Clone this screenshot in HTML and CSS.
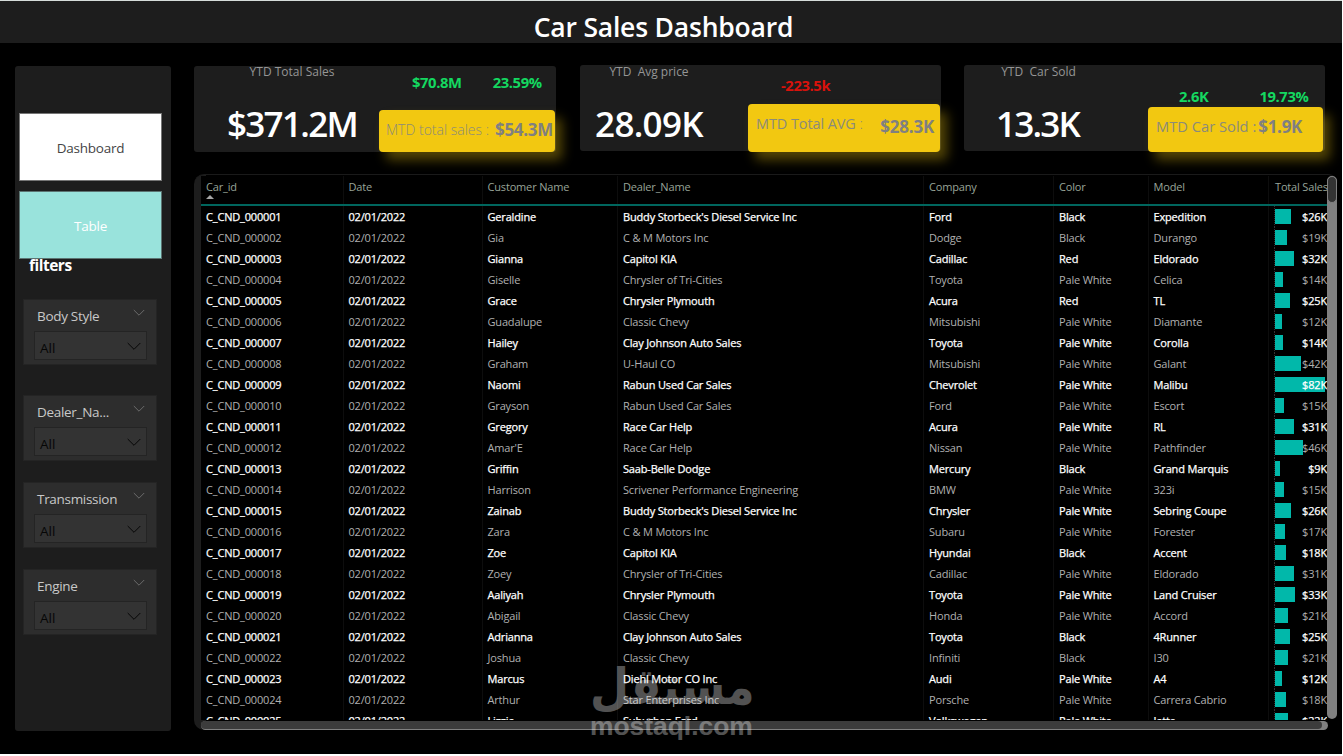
FILE: index.html
```html
<!DOCTYPE html>
<html lang="en">
<head>
    <meta charset="utf-8">
    <title>Car Sales Dashboard</title>
    <link rel="stylesheet" href="styles.css">
</head>
<body>
    <div class="page">
        <header class="top">
            <h1>Car Sales Dashboard</h1>
        </header>
        <div class="main">
            <aside class="sidebar">
                <button class="nav-btn">Dashboard</button>
                <button class="nav-btn active">Table</button>
                <h2>filters</h2>
                <div class="filter">
                    <div class="filter-head"><span>Body Style</span><svg width="12" height="8" viewBox="0 0 12 8"><path d="M0.8 1 L6 6.2 L11.2 1"/></svg></div>
                    <div class="select"><span>All</span><svg width="14" height="9" viewBox="0 0 14 9"><path d="M0.7 1 L7 7.3 L13.3 1"/></svg></div>
                </div>
                <div class="filter">
                    <div class="filter-head"><span>Dealer_Na...</span><svg width="12" height="8" viewBox="0 0 12 8"><path d="M0.8 1 L6 6.2 L11.2 1"/></svg></div>
                    <div class="select"><span>All</span><svg width="14" height="9" viewBox="0 0 14 9"><path d="M0.7 1 L7 7.3 L13.3 1"/></svg></div>
                </div>
                <div class="filter">
                    <div class="filter-head"><span>Transmission</span><svg width="12" height="8" viewBox="0 0 12 8"><path d="M0.8 1 L6 6.2 L11.2 1"/></svg></div>
                    <div class="select"><span>All</span><svg width="14" height="9" viewBox="0 0 14 9"><path d="M0.7 1 L7 7.3 L13.3 1"/></svg></div>
                </div>
                <div class="filter">
                    <div class="filter-head"><span>Engine</span><svg width="12" height="8" viewBox="0 0 12 8"><path d="M0.8 1 L6 6.2 L11.2 1"/></svg></div>
                    <div class="select"><span>All</span><svg width="14" height="9" viewBox="0 0 14 9"><path d="M0.7 1 L7 7.3 L13.3 1"/></svg></div>
                </div>
            </aside>
            <div class="content">
                <section class="cards">
                    <div class="card sales">
                        <div class="ytd">
                            <span class="label">YTD Total Sales</span>
                            <b class="value">$371.2M</b>
                        </div>
                        <div class="deltas"><span>$70.8M</span><span>23.59%</span></div>
                        <div class="mtd"><span>MTD total sales :</span><b>$54.3M</b></div>
                    </div>
                    <div class="card avg">
                        <div class="ytd">
                            <span class="label">YTD&nbsp; Avg price</span>
                            <b class="value">28.09K</b>
                        </div>
                        <div class="deltas down"><span>-223.5k</span></div>
                        <div class="mtd"><span>MTD Total AVG <i>:</i></span><b>$28.3K</b></div>
                    </div>
                    <div class="card sold">
                        <div class="ytd">
                            <span class="label">YTD&nbsp; Car Sold</span>
                            <b class="value">13.3K</b>
                        </div>
                        <div class="deltas"><span>2.6K</span><span>19.73%</span></div>
                        <div class="mtd"><span>MTD Car Sold :</span><b>$1.9K</b></div>
                    </div>
                </section>
                <section class="table-box">
                    <div class="table-view">
                        <div class="row head">
                            <div>Car_id<svg class="sort" width="8" height="4" viewBox="0 0 8 4"><path d="M4 0 L8 4 H0 Z"/></svg></div>
                            <div>Date</div>
                            <div>Customer Name</div>
                            <div>Dealer_Name</div>
                            <div>Company</div>
                            <div>Color</div>
                            <div>Model</div>
                            <div>Total Sales</div>
                        </div>
                        <div id="rows" class="rows"></div>
                    </div>
                    <div class="scroll-y"><div class="thumb"></div></div>
                    <div class="scroll-x"><div class="thumb"></div></div>
                </section>
            </div>
        </div>
        <div class="watermark">
            <span class="wm-ar" lang="ar">مستقل</span>
            <span class="wm-en">mostaql.com</span>
        </div>
    </div>
    <script src="script.js"></script>
</body>
</html>
```
FILE: styles.css
```css
* {
    box-sizing: border-box;
}

body {
    margin: 0;
    background: #fff;
    font-family: "Open Sans", "Noto Sans", sans-serif;
    overflow: hidden;
}

.page {
    position: relative;
    width: 1342px;
    height: 754px;
    background: #000;
    border-top: 1px solid #d5dcda;
    overflow: hidden;
}

.top {
    height: 42px;
    background: #1d1d1d;
    text-align: center;
}

h1 {
    margin: 0;
    padding-right: 15px;
    color: #fff;
    font-size: 26.5px;
    line-height: 53px;
    font-weight: 600;
    letter-spacing: -0.2px;
}

.main {
    display: flex;
    padding: 22px 0 0 15px;
    gap: 23px;
}

/* sidebar */
.sidebar {
    width: 156px;
    height: 665px;
    margin-top: 1px;
    padding: 47px 4px 0 4px;
    background: #1d1d1d;
    border-radius: 3px;
}

.nav-btn {
    display: block;
    width: 143px;
    height: 68px;
    margin: 0 0 10px;
    padding: 2px 0 0;
    border: 1px solid #757575;
    background: #fff;
    color: #444;
    font-family: inherit;
    font-size: 13.5px;
    letter-spacing: -0.25px;
}

.nav-btn.active {
    margin-bottom: 0;
    background: #99e3dc;
    color: #fff;
    border-color: #5c7472;
}

h2 {
    margin: -3px 0 0 10px;
    height: 43px;
    color: #fff;
    font-size: 15.5px;
    line-height: 19px;
    font-weight: 700;
    letter-spacing: -0.5px;
}

.filter {
    width: 134px;
    height: 66px;
    margin: 0 0 21px 4px;
    padding: 6px 10px 0 10px;
    background: #2d2d2d;
    border: 1px solid #242424;
}

.filter:nth-of-type(1) {
    margin-bottom: 30px;
}

.filter-head {
    display: flex;
    justify-content: space-between;
    padding: 0 1px 0 3px;
    height: 25px;
    color: #c8c8c8;
    font-size: 13.5px;
    line-height: 20px;
    letter-spacing: -0.3px;
}

.filter-head svg {
    margin-top: 3px;
}

svg path {
    fill: none;
    stroke: #6c6c6c;
}

.select {
    display: flex;
    justify-content: space-between;
    width: 113px;
    height: 29px;
    padding: 0 5px;
    background: #333;
    border: 1px solid #242424;
    color: #060606;
    font-size: 13.5px;
    line-height: 33px;
}

.select svg {
    margin-top: 10px;
}

.select svg path {
    stroke: #060606;
}

/* cards */
.cards {
    display: flex;
    height: 87px;
}

.card {
    position: relative;
    display: flex;
    width: 361px;
    height: 86px;
    background: #1d1d1d;
    border-radius: 3px;
}

.sales {
    width: 362px;
    margin: 1px 24px 0 0;
}

.avg {
    margin-right: 23px;
}

.ytd {
    display: flex;
    flex-direction: column;
    align-items: center;
    width: 196px;
}

.avg .ytd {
    width: 138px;
}

.sold .ytd {
    width: 149px;
}

.label {
    color: #959595;
    font-size: 12px;
    line-height: 13px;
}

.sales .label {
    line-height: 11px;
    margin-bottom: 1px;
}

.value {
    color: #fff;
    font-size: 35px;
    line-height: 40px;
    margin-top: 26px;
    font-weight: 600;
    letter-spacing: -0.7px;
}

.sales .value {
    letter-spacing: -1.7px;
}

.sold .value {
    letter-spacing: -1.8px;
    padding-right: 2px;
}

.deltas {
    display: flex;
    gap: 31px;
    margin-left: 22px;
    color: #14d860;
    font-size: 14.8px;
    line-height: 33px;
    font-weight: 700;
    letter-spacing: -0.4px;
}

.avg .deltas {
    margin: 4px 0 0 63px;
}

.sold .deltas {
    gap: 51px;
    margin: 15px 0 0 66px;
}

.deltas.down {
    color: #d8120c;
}

.mtd {
    position: absolute;
    display: flex;
    justify-content: space-between;
    right: 1px;
    bottom: 0;
    width: 176px;
    height: 42px;
    padding: 0 2px 0 7px;
    background: #f2c811;
    border-radius: 4px;
    box-shadow: 7px 8px 12px rgba(242, 200, 17, 0.35);
    color: #8b8b7a;
    font-size: 14px;
    line-height: 40px;
    font-weight: 300;
}

.mtd b {
    color: #808080;
    font-size: 17px;
    font-weight: 700;
    letter-spacing: -0.3px;
}

.avg .mtd {
    right: 1px;
    bottom: -1px;
    width: 192px;
    height: 48px;
    padding: 0 6px 0 8px;
    font-size: 14.5px;
    font-weight: 400;
    letter-spacing: -0.1px;
    line-height: 40px;
}

.avg .mtd i {
    font-style: normal;
    font-weight: 300;
}

.avg .mtd b {
    line-height: 45px;
    font-size: 17px;
    letter-spacing: -0.2px;
}

.sold .mtd {
    right: 2px;
    bottom: -1px;
    width: 175px;
    height: 45px;
    padding-left: 8px;
    justify-content: flex-start;
    gap: 2px;
    font-size: 14.7px;
    font-weight: 400;
    line-height: 39px;
}

/* table */
.table-box {
    display: flex;
    flex-wrap: wrap;
    width: 1144px;
    height: 556px;
    margin-top: 22px;
    padding: 1px 0 0 7px;
    background: linear-gradient(to right, #1d1d1d 12px, #000 12px);
    border-radius: 10px;
    border-top: 1px solid #1a1a1a;
}

.table-view {
    width: 1126px;
    height: 544px;
    background: #000;
    overflow: hidden;
}

.row {
    display: grid;
    grid-template-columns: 142.5px 139px 135.5px 306px 130px 94.5px 120.5px 58px;
    height: 21px;
    color: #b0b0b0;
    font-size: 11px;
    line-height: 21px;
    letter-spacing: -0.17px;
    white-space: nowrap;
}

.row > div {
    padding-left: 5px;
    border-right: 1px solid #0d0d0d;
}

.row > div:last-child {
    border-right: none;
}

.row:nth-child(odd) {
    color: #fff;
    -webkit-text-stroke: 0.25px #fff;
}

.row.head {
    height: 30px;
    border-bottom: 2px solid #00665e;
    color: #98a498;
    -webkit-text-stroke: 0;
}

.row.head > div:last-child {
    padding-left: 6px;
}

.sort {
    display: block;
    margin-top: -2px;
}

.sort path {
    fill: #a6a6a6;
    stroke: none;
}

.row .total {
    position: relative;
    margin-left: 5px;
    padding: 0;
    border-left: 1px dotted #333;
}

.bar {
    height: 15px;
    margin-top: 3px;
    background: #01b8aa;
}

.total span {
    position: absolute;
    right: 0;
    top: 0;
}

.scroll-y {
    width: 10px;
    height: 543px;
    background: #808080;
    border-radius: 5px;
}

.scroll-y .thumb {
    height: 27px;
    border: 1px solid #808080;
    border-radius: 5px;
    background: #333;
}

.scroll-x {
    width: 1127px;
    height: 9px;
    background: #808080;
    border-radius: 5px;
}

.scroll-x .thumb {
    width: 1121px;
    height: 8px;
    border-radius: 5px;
    background: #3c3c3c;
}

/* stamp over the table */
.watermark {
    position: absolute;
    left: 590px;
    top: 656px;
    width: 163px;
    color: #fff;
    opacity: 0.32;
}

.wm-ar,
.wm-en {
    display: block;
    white-space: nowrap;
}

.wm-ar {
    width: 178px;
    height: 52px;
    font-family: "DejaVu Sans", sans-serif;
    font-weight: 700;
    font-size: 50px;
    line-height: 60px;
    transform: scaleX(0.9);
    transform-origin: left;
}

.wm-en {
    font-family: "Liberation Sans", sans-serif;
    font-weight: 700;
    font-size: 26.4px;
    line-height: 34px;
}
```
FILE: script.js
```js
// id is generated, every sale has the same date
let date = "02/01/2022";
// customer, dealer, company, color, model, total, bar px
let sales = [
    ["Geraldine", "Buddy Storbeck's Diesel Service Inc", "Ford", "Black", "Expedition", 26, 16],
    ["Gia", "C & M Motors Inc", "Dodge", "Black", "Durango", 19, 12],
    ["Gianna", "Capitol KIA", "Cadillac", "Red", "Eldorado", 32, 19],
    ["Giselle", "Chrysler of Tri-Cities", "Toyota", "Pale White", "Celica", 14, 8],
    ["Grace", "Chrysler Plymouth", "Acura", "Red", "TL", 25, 15],
    ["Guadalupe", "Classic Chevy", "Mitsubishi", "Pale White", "Diamante", 12, 7],
    ["Hailey", "Clay Johnson Auto Sales", "Toyota", "Pale White", "Corolla", 14, 8],
    ["Graham", "U-Haul CO", "Mitsubishi", "Pale White", "Galant", 42, 26],
    ["Naomi", "Rabun Used Car Sales", "Chevrolet", "Pale White", "Malibu", 82, 50],
    ["Grayson", "Rabun Used Car Sales", "Ford", "Pale White", "Escort", 15, 9],
    ["Gregory", "Race Car Help", "Acura", "Pale White", "RL", 31, 19],
    ["Amar'E", "Race Car Help", "Nissan", "Pale White", "Pathfinder", 46, 28],
    ["Griffin", "Saab-Belle Dodge", "Mercury", "Black", "Grand Marquis", 9, 5],
    ["Harrison", "Scrivener Performance Engineering", "BMW", "Pale White", "323i", 15, 9],
    ["Zainab", "Buddy Storbeck's Diesel Service Inc", "Chrysler", "Pale White", "Sebring Coupe", 26, 16],
    ["Zara", "C & M Motors Inc", "Subaru", "Pale White", "Forester", 17, 10],
    ["Zoe", "Capitol KIA", "Hyundai", "Black", "Accent", 18, 11],
    ["Zoey", "Chrysler of Tri-Cities", "Cadillac", "Pale White", "Eldorado", 31, 19],
    ["Aaliyah", "Chrysler Plymouth", "Toyota", "Pale White", "Land Cruiser", 33, 20],
    ["Abigail", "Classic Chevy", "Honda", "Pale White", "Accord", 21, 13],
    ["Adrianna", "Clay Johnson Auto Sales", "Toyota", "Black", "4Runner", 25, 15],
    ["Joshua", "Classic Chevy", "Infiniti", "Black", "I30", 21, 13],
    ["Marcus", "Diehl Motor CO Inc", "Audi", "Pale White", "A4", 12, 7],
    ["Arthur", "Star Enterprises Inc", "Porsche", "Pale White", "Carrera Cabrio", 18, 11],
    ["Lizzie", "Suburban Ford", "Volkswagen", "Pale White", "Jetta", 22, 13]
];

let html = "";
for (let i = 0; i < sales.length; i++) {
    let s = sales[i];
    let id = "C_CND_" + String(i + 1).padStart(6, "0");
    html += '<div class="row"><div>' + id + "</div><div>" + date + "</div>";
    for (let j = 0; j < 5; j++) {
        html += "<div>" + s[j].replace("&", "&amp;") + "</div>";
    }
    html += '<div class="total"><div class="bar" style="width:' + s[6] + 'px"></div><span>$' + s[5] + "K</span></div></div>";
}
document.getElementById("rows").innerHTML = html;
```
